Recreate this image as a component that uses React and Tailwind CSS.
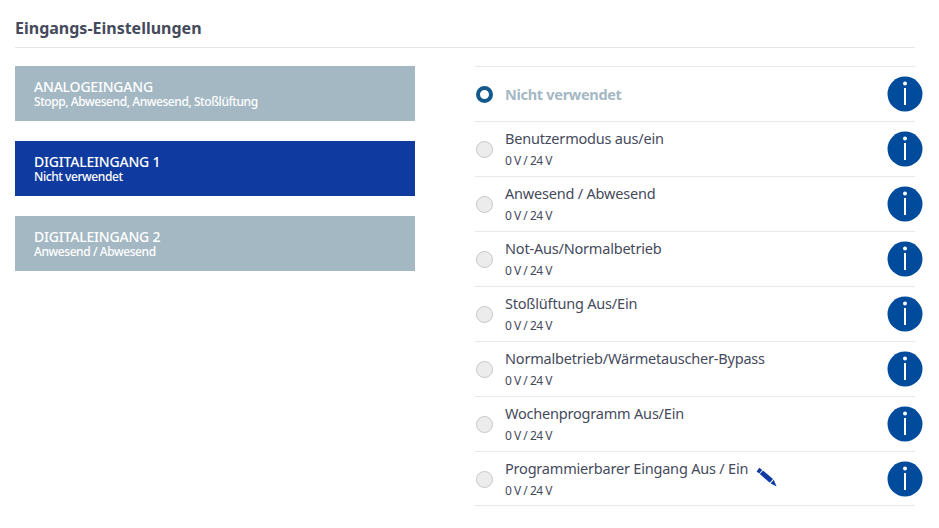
const font = { fontFamily: '"Noto Sans", "Open Sans", sans-serif' };

function Info() {
  return (
    <svg width="36" height="36" viewBox="0 0 36 36" className="shrink-0 -mr-[8px]">
      <circle cx="18" cy="18" r="17.5" fill="#004b9b" />
      <circle cx="18" cy="7.5" r="2" fill="#fff" />
      <rect x="17" y="12" width="2" height="17" fill="#fff" />
    </svg>
  );
}

function Pencil() {
  return (
    <svg width="21" height="21" viewBox="0 0 21 21" className="ml-[8px] mt-[17px]">
      <path d="M0.6 4.4 L3.4 0.8 L6.2 3 L3.2 6.4 Z" fill="#0f3ba0" />
      <path d="M3.8 7 L7 3.6 L17 12 L13.8 15.8 Z" fill="#0f3ba0" />
      <path d="M14.6 16.4 L17.7 12.8 L20.6 19.6 Z" fill="#0f3ba0" />
    </svg>
  );
}

function Card({ title, sub, active }) {
  return (
    <div className={`h-[55px] w-[400px] px-[19px] pt-[12px] text-white ${active ? "bg-[#0f3ba0]" : "bg-[#a4b8c4]"}`}>
      <div className="text-[14px] leading-[17px] font-medium tracking-[-0.2px]">{title}</div>
      <div className="text-[12px] leading-[13px] font-medium tracking-[-0.43px]">{sub}</div>
    </div>
  );
}

function Row({ title, pencil, last }) {
  return (
    <div className={`flex items-center border-t border-[#e8e9eb] ${last ? "h-[54px]" : "h-[55px]"}`}>
      <div className="ml-px mt-[1px] h-[17px] w-[17px] shrink-0 rounded-full border border-[#c6c7c9] bg-[#ececec]" />
      <div className={`ml-[12px] flex-1 ${last ? "-mt-[1px]" : "-mt-[2px]"}`}>
        <div className="flex h-[21px] items-center text-[14.5px] tracking-[-0.2px] text-[#454a5c]">
          {title}
          {pencil && <Pencil />}
        </div>
        <div className="mt-[4px] text-[12px] leading-[15px] tracking-[-0.5px] text-[#454a5c]">0 V / 24 V</div>
      </div>
      <Info />
    </div>
  );
}

export default function App() {
  const rows = [
    "Benutzermodus aus/ein",
    "Anwesend / Abwesend",
    "Not-Aus/Normalbetrieb",
    "Stoßlüftung Aus/Ein",
    "Normalbetrieb/Wärmetauscher-Bypass",
    "Wochenprogramm Aus/Ein",
  ];
  return (
    <div className="h-[528px] w-[939px] overflow-hidden bg-white px-[15px]" style={font}>
      <div className="mr-[9px] flex h-[48px] items-end border-b border-[#e5e6e8] pb-[9px]">
        <h1 className="text-[16px] leading-[20px] font-bold tracking-[0px] text-[#454a5c]">Eingangs-Einstellungen</h1>
      </div>
      <div className="mt-[18px] flex">
        <div className="flex w-[400px] flex-col gap-[20px]">
          <Card title="ANALOGEINGANG" sub="Stopp, Abwesend, Anwesend, Stoßlüftung" />
          <Card title="DIGITALEINGANG 1" sub="Nicht verwendet" active />
          <Card title="DIGITALEINGANG 2" sub="Anwesend / Abwesend" />
        </div>
        <div className="ml-[60px] w-[440px] border-b border-[#e8e9eb]">
          <div className="flex h-[55px] items-center border-t border-[#e8e9eb]">
            <div className="ml-px mt-[1px] h-[17px] w-[17px] shrink-0 rounded-full border-[4px] border-[#135a8c] bg-white" />
            <div className="ml-[12px] mt-[1px] flex-1 text-[14.5px] font-bold tracking-[-0.3px] text-[#a4b8c4]">Nicht verwendet</div>
            <Info />
          </div>
          {rows.map((r) => (
            <Row key={r} title={r} />
          ))}
          <Row title="Programmierbarer Eingang Aus / Ein" pencil last />
        </div>
      </div>
    </div>
  );
}
